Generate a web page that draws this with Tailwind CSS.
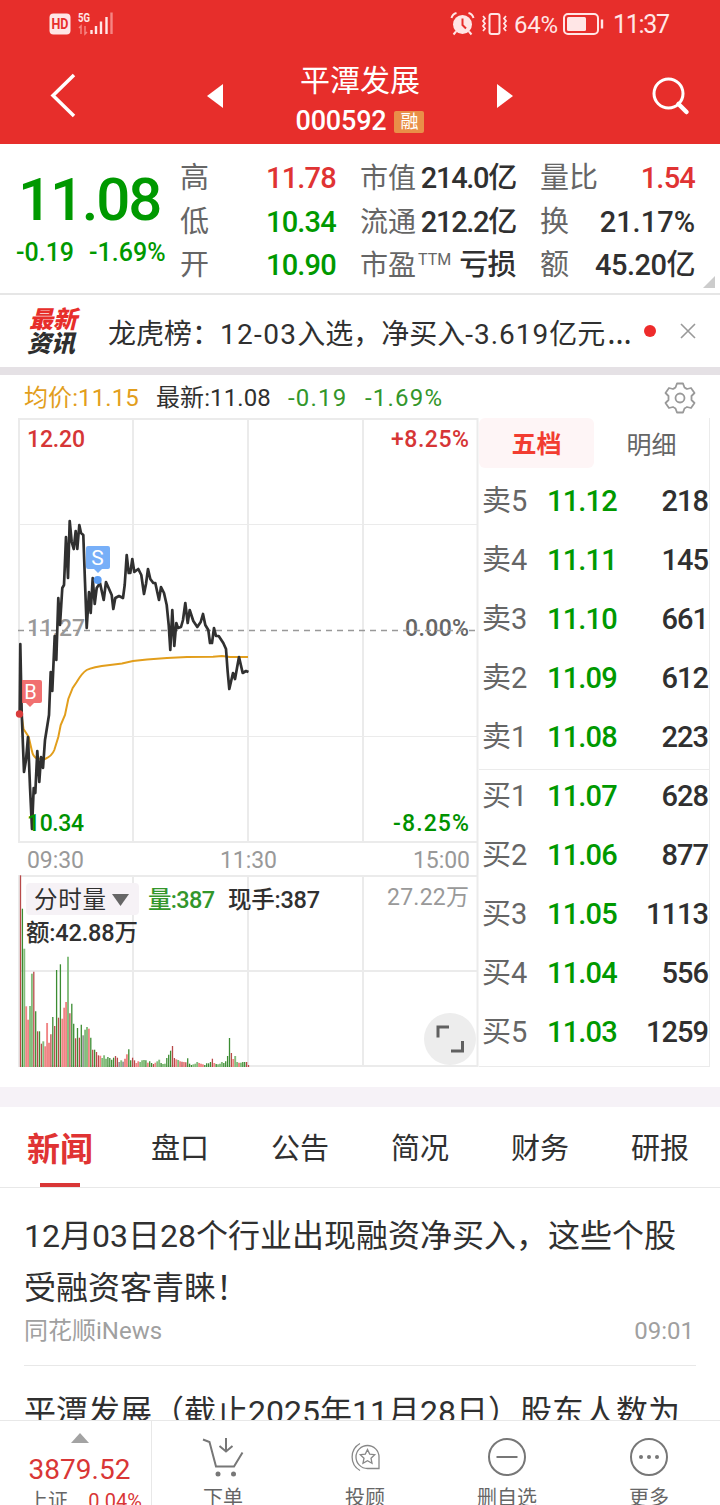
<!DOCTYPE html>
<html lang="zh-CN">
<head>
    <meta charset="UTF-8">
    <meta name="viewport" content="width=device-width, initial-scale=1.0">
    <title>平潭发展 000592</title>
    <script src="https://cdn.jsdelivr.net/npm/@tailwindcss/browser@4"></script>
</head>
<body class="bg-white">
<div class="w-[720px] h-[1505px] overflow-hidden flex flex-col bg-white text-[#303030] font-['Roboto','Noto_Sans_CJK_SC',sans-serif] leading-none whitespace-nowrap">

    <!-- Header -->
    <header class="h-36 shrink-0 bg-[#e72e2b] text-white">
        <!-- Status bar -->
        <div class="h-12 flex items-center justify-between pl-[49px] pr-[50px] text-[#ffe6e6]">
            <svg width="66" height="26" viewBox="49 12 66 26" fill="none">
                <rect x="49.500" y="14.500" width="21" height="21" rx="4" fill="#ffe6e6"/>
                <text x="60" y="30" text-anchor="middle" font-size="14" font-weight="700" fill="#e72e2b" textLength="17" lengthAdjust="spacingAndGlyphs">HD</text>
                <text x="78" y="23" font-size="13.500" font-weight="700" fill="#ffe6e6" textLength="12" lengthAdjust="spacingAndGlyphs">5G</text>
                <path d="M79 29l2-2v8M85 27v8l2-2" stroke="#f58583" stroke-width="1.500"/>
                <path d="M91.500 31v4M96 27v8M101 22.500v12.500M106.500 18v17" stroke="#ffe6e6" stroke-width="2.400"/>
                <path d="M111.500 13.500v21.500" stroke="#f58583" stroke-width="2.400"/>
            </svg>
            <div class="flex items-center">
                <svg width="60" height="26" viewBox="449 11 60 26" fill="none" stroke="#ffe6e6">
                    <circle cx="462.500" cy="24.500" r="9.500" fill="#ffe6e6" stroke="none"/>
                    <path d="M451.500 18q1-4 5-5M468.500 13q4 1 5 5M456 31.500l-2.500 3M469 31.500l2.500 3" stroke-width="2"/>
                    <path d="M462.500 18.500v6.500l3.500 3.500" stroke="#e72e2b" stroke-width="2"/>
                    <rect x="489.500" y="14" width="10" height="20" rx="2" stroke-width="2"/>
                    <path d="M483 16l2 2.500-2 2.500 2 2.500-2 2.500 2 2.500-2 2.500M506 16l-2 2.500 2 2.500-2 2.500 2 2.500-2 2.500 2 2.500" stroke-width="1.800"/>
                </svg>
                <span class="w-[44px] ml-[5px] pt-[2px] text-[24px] tracking-[-0.3px]">64%</span>
                <svg class="ml-[4px]" width="42" height="24" viewBox="562 13 42 24" fill="none" stroke="#ffe6e6">
                    <rect x="564" y="15" width="34" height="20" rx="4" stroke-width="2"/>
                    <rect x="567" y="18" width="19" height="14" rx="1.500" fill="#ffe6e6" stroke="none"/>
                    <path d="M602 20.500v9" stroke-width="2.400"/>
                </svg>
                <span class="w-[57px] ml-[9px] pt-[1px] text-[25px] tracking-[-1.3px]">11:37</span>
            </div>
        </div>
        <!-- Title bar -->
        <div class="h-24 flex items-center justify-between pl-[50px] pr-[30px]">
            <svg width="28" height="46" viewBox="50 72 28 46" fill="none" stroke="#fff" stroke-width="3.500"><path d="M74 74L53 94.500L74 115"/></svg>
            <svg class="ml-[96px]" width="18" height="26" viewBox="0 0 18 26" fill="#fff"><path d="M1 13L17 1v24z"/></svg>
            <div class="flex flex-col items-center w-[140px] ml-[34px] mr-[1px] pt-[13px]">
                <div class="text-[30px] h-[38px]">平潭发展</div>
                <div class="flex items-center gap-2 h-[36px]">
                    <span class="text-[27px] font-medium tracking-[-0.2px]">000592</span>
                    <span class="w-[30px] h-[22px] rounded-[2px] bg-[#e98f48] text-[18px] flex items-center justify-center">融</span>
                </div>
            </div>
            <svg class="ml-[33px] mr-[2px]" width="18" height="26" viewBox="0 0 18 26" fill="#fff"><path d="M17 13L1 1v24z"/></svg>
            <svg class="ml-[102px]" width="40" height="40" viewBox="650 76 40 40" fill="none" stroke="#fff"><circle cx="668.500" cy="93.500" r="14.500" stroke-width="3"/><path d="M678.500 104l8 8" stroke-width="4.500" stroke-linecap="round"/></svg>
        </div>
    </header>

    <!-- Quote -->
    <section class="relative h-[151px] shrink-0 border-b-2 border-[#e6e6e6] flex">
        <div class="w-[180px] text-[#009900] pt-[24px]">
            <div class="pl-[18px] text-[60px] font-medium h-[63px] leading-[63px] tracking-[-2.2px]">11.08</div>
            <div class="pl-[16px] pt-[9px] flex gap-[15px] text-[25px] font-medium"><span>-0.19</span><span>-1.69%</span></div>
        </div>
        <div class="w-[156px] pt-[13px] text-[29px] leading-[43.5px]">
            <div class="flex justify-between"><span class="text-[#666]">高</span><span class="font-medium text-[#e03333] tracking-[-0.8px]">11.78</span></div>
            <div class="flex justify-between"><span class="text-[#666]">低</span><span class="font-medium text-[#009900] tracking-[-0.8px]">10.34</span></div>
            <div class="flex justify-between"><span class="text-[#666]">开</span><span class="font-medium text-[#009900] tracking-[-0.8px]">10.90</span></div>
        </div>
        <div class="w-[156px] ml-[24px] pt-[13px] text-[29px] leading-[43.5px]">
            <div class="flex justify-between"><span class="text-[#666] text-[28px]">市值</span><span class="font-medium tracking-[-1.3px]">214.0亿</span></div>
            <div class="flex justify-between"><span class="text-[#666] text-[28px]">流通</span><span class="font-medium tracking-[-1.3px]">212.2亿</span></div>
            <div class="flex justify-between"><span class="text-[#666] text-[28px] flex">市盈<span class="pl-[2px] text-[16px] leading-[32px]">TTM</span></span><span class="font-medium tracking-[-0.6px]">亏损</span></div>
        </div>
        <div class="w-[155px] ml-[24px] pt-[13px] text-[29px] leading-[43.5px]">
            <div class="flex justify-between"><span class="text-[#666]">量比</span><span class="font-medium text-[#e03333] tracking-[-0.8px]">1.54</span></div>
            <div class="flex justify-between"><span class="text-[#666]">换</span><span class="font-medium">21.17%</span></div>
            <div class="flex justify-between"><span class="text-[#666]">额</span><span class="font-medium tracking-[-0.5px]">45.20亿</span></div>
        </div>
        <svg class="absolute right-[5px] bottom-[5px]" width="12" height="12" viewBox="0 0 12 12"><path d="M12 0v12H0z" fill="#ccc"/></svg>
    </section>

    <!-- News ticker -->
    <section class="h-[80px] shrink-0 border-b-8 border-[#e5e1e5] flex items-center">
        <div class="w-[80px] pl-[28px] pt-[2px] text-[24px] leading-[24px] font-black italic text-[#2e2e2e]">
            <div class="pl-px text-[#e72e2b]">最新</div>
            <div class="-ml-px">资讯</div>
        </div>
        <div class="w-[530px] ml-[28px] pt-[4px] text-[28px]">龙虎榜：<span class="tracking-[1.3px]">12-03</span>入选，净买入<span class="tracking-[1px]">-3.619</span>亿元<span class="pl-[2px] font-['Noto_Sans'] text-[31px] leading-[28px]">…</span></div>
        <div class="w-3 h-3 ml-[6px] rounded-full bg-[#ee2b2b]"></div>
        <svg class="ml-[24px]" width="16" height="16" viewBox="0 0 16 16" stroke="#999" stroke-width="1.600"><path d="M1 1l14 14M15 1L1 15"/></svg>
    </section>

    <!-- Chart legend -->
    <section class="h-[43px] shrink-0 flex items-center pl-[24px] pr-[23px] pt-[2px] text-[24px]">
        <span class="w-[132px] text-[#e29e1c] tracking-[0.1px]">均价:11.15</span>
        <span class="w-[132px] tracking-[0.1px]">最新:11.08</span>
        <span class="w-[77px] text-[#33962b] tracking-[1.2px]">-0.19</span>
        <span class="text-[#33962b] tracking-[1.2px]">-1.69%</span>
        <svg class="ml-auto" width="34" height="34" viewBox="-17 -17 34 34" fill="none" stroke="#999" stroke-width="1.800" stroke-linejoin="round"><circle r="4.500"/><path d="M-3-14.500H3L4.500-10.500Q6-9.500 7-9L11-10L14.500-5L11.500-2V2L14.500 5L11 10L7 9Q6 9.500 4.500 10.500L3 14.500H-3L-4.500 10.500Q-6 9.500-7 9L-11 10L-14.500 5L-11.500 2V-2L-14.500-5L-11-10L-7-9Q-6-9.500-4.500-10.500z"/></svg>
    </section>

    <!-- Chart and order book -->
    <section class="h-[669px] shrink-0 flex">
        <svg width="479" height="651" viewBox="0 418 479 651" fill="none">
            <g stroke="#ebebeb" stroke-width="2">
                <path d="M18 419H478M18 842H478M19 418V843M133 418V843M248 418V843M363 418V843M477.500 418V1067"/>
                <path d="M18 524.500H478M18 736.500H478" stroke-width="1.200"/>
                <path d="M18 876H478M18 971H478M18 1066H478M19 875V1067M133 875V1067M248 875V1067M363 875V1067"/>
            </g>
            <g font-size="23" font-weight="500" fill="#999">
                <text x="27" y="636" textLength="58">11.27</text>
                <text x="405" y="636" fill="#666" textLength="64">0.00%</text>
                <text x="27" y="868" font-weight="400" textLength="57">09:30</text>
                <text x="220" y="868" font-weight="400" textLength="57">11:30</text>
                <text x="413" y="868" font-weight="400" textLength="57">15:00</text>
                <text x="387" y="905" font-weight="400" textLength="82">27.22万</text>
                <text x="27" y="447" fill="#d63636" textLength="58">12.20</text>
                <text x="391" y="447" fill="#d63636" textLength="78">+8.25%</text>
                <text x="393" y="831" fill="#009200" textLength="76">-8.25%</text>
            </g>
            <path d="M18 630.500H478" stroke="#999" stroke-width="1.500" stroke-dasharray="6 5"/>
            <!-- average price -->
            <path d="M20 713L22 718L23.500 729L28.700 737L31.700 750Q33 757 37 758.500L45 759Q52 756 54.300 750L58.300 737L60.700 725L65 715L68.300 699L72.700 688L76.700 682Q82 673 86.700 670Q92 667 110 665L122 663.500L133 661L147 659.500L167 658L187 657L213 656.700L222 656L230 657H248" stroke="#e29e1c" stroke-width="2"/>
            <!-- price -->
            <path d="M19.700 713L20.300 644L21.700 713L24 772L26 760L28 737L30 787L32 829L33.700 788L35.300 793L37.300 751L39.300 782L41 757L43 768L45 740L49 715L50.700 672L52.300 691L54.700 636L56.300 660L58.300 598L60 625L62.300 588L64 585L66 537L68 578L69.700 521L71.700 542L73.700 549L75.700 531L77.300 549L79.300 525L81 533L83.300 535L85 582L86.700 628L89 592L90.700 613L92.700 578L94.700 604L96.700 588L100 583L103.700 600L106 582L111.700 595L113.300 609L115.300 598L119 596L123 598L124.700 585L126.700 555L128.700 573H130.300L132.300 559L134.300 572L138.300 569L141.300 575L144 594L146 584L148 569L150.300 579L153.300 583H155.300L159 600L161 587L164 593L166.700 605L168.700 625L170.300 650L172.300 610L174.300 646L176.300 623L178 628L181 627L183 620L185.300 603L187.700 623L189.700 610L193.300 621L197.300 627L200.700 622L203 614L205.300 625L208.300 630L210 643H212L214 628L216 636H218.700L223.300 643L226 649L227.700 672L229.300 689L233 673L235 679L239 657L242.700 673L246 671L248.500 672" stroke="#303030" stroke-width="2.700" stroke-linejoin="round"/>
            <text x="27" y="831" font-size="23" font-weight="500" fill="#009200" textLength="57">10.34</text>
            <!-- trade markers -->
            <path d="M88 546h20a2 2 0 0 1 2 2v19a2 2 0 0 1-2 2h-6l-4 4-4-4h-6a2 2 0 0 1-2-2v-19a2 2 0 0 1 2-2z" fill="#77aff8"/>
            <circle cx="97.700" cy="580" r="4" fill="#5b9df3"/>
            <text x="97.500" y="565" font-size="21" text-anchor="middle" fill="#fff">S</text>
            <path d="M22 680h18a2 2 0 0 1 2 2v19a2 2 0 0 1-2 2h-6l-4 4-4-4h-4z" fill="#f06060" fill-opacity=".9"/>
            <circle cx="19.500" cy="714" r="3.700" fill="#d93c3c"/>
            <text x="30.500" y="699" font-size="20" text-anchor="middle" fill="#fff">B</text>
            <!-- volume -->
            <g id="volume" stroke-width="1.300"></g>
            <rect x="26" y="883" width="113" height="32" rx="4" fill="#f6f2f6"/>
            <g font-size="23.500" fill="#303030">
                <text x="34" y="908" textLength="72">分时量</text>
                <path d="M112 894h17l-8.500 12z" fill="#666"/>
                <text x="148" y="908" font-weight="500" fill="#33962b" textLength="67">量:387</text>
                <text x="228" y="908" font-weight="500" textLength="92">现手:387</text>
                <text x="26" y="941" font-weight="500" textLength="112">额:42.88万</text>
            </g>
            <circle cx="450" cy="1039" r="26" fill="#ededed"/>
            <path d="M438 1037.500V1027H449M462.500 1041V1051H451" stroke="#606060" stroke-width="3"/>
        </svg>

        <div class="w-[231px] h-[649px] border-r border-b border-[#ebebeb] flex flex-col">
            <div class="h-[50px] flex text-[25px] items-center">
                <div class="w-[115px] h-[50px] pt-[3px] rounded-md bg-[#fef5f6] text-[#f23d31] font-bold flex items-center justify-center">五档</div>
                <div class="w-[115px] pt-[4px] text-center text-[#666]">明细</div>
            </div>
            <div id="asks" class="h-[302px] pt-[4px] border-b border-[#ebebeb]"></div>
            <div id="bids" class="-mt-[3px]"></div>
        </div>
    </section>

    <!-- Tabs -->
    <nav class="h-[101px] shrink-0 border-t-[20px] border-t-[#f6f2f7] border-b border-b-[#e8e8e8] flex text-[29px]">
        <a class="relative flex-1 flex items-center justify-center pt-[4px] text-[33px] font-bold text-[#e03333]">新闻<span class="absolute bottom-0 w-10 h-1 bg-[#d93636]"></span></a>
        <a class="flex-1 flex items-center justify-center pt-[4px]">盘口</a>
        <a class="flex-1 flex items-center justify-center pt-[4px]">公告</a>
        <a class="flex-1 flex items-center justify-center pt-[4px]">简况</a>
        <a class="flex-1 flex items-center justify-center pt-[4px]">财务</a>
        <a class="flex-1 flex items-center justify-center pt-[4px]">研报</a>
    </nav>

    <!-- News list -->
    <main class="h-[232px] shrink-0 overflow-hidden px-6">
        <article class="h-[178px] border-b border-[#e8e8e8] pt-[22px]">
            <h2 class="text-[32px] leading-[52px]">12月03日28个行业出现融资净买入，这些个股<br>受融资客青睐！</h2>
            <div class="flex justify-between pt-[5px] pr-[2px] text-[24px] text-[#a0a0a0]"><span>同花顺iNews</span><span>09:01</span></div>
        </article>
        <article class="pt-[20px]">
            <h2 class="text-[32px] leading-[52px]">平潭发展（截止2025年11月28日）股东人数为</h2>
        </article>
    </main>

    <!-- Bottom bar -->
    <footer class="h-[85px] shrink-0 border-t border-[#e8e8e8] flex text-[20px] text-[#666]">
        <div class="w-[152px] border-r border-[#e8e8e8] flex flex-col items-center pl-[8px] pt-[12px] text-[#d93636]">
            <svg class="shrink-0" width="18" height="10" viewBox="0 0 18 10"><path d="M9 0l9 10H0z" fill="#a3a3a3"/></svg>
            <div class="shrink-0 text-[28px] pt-[13px]">3879.52</div>
            <div class="shrink-0 w-full flex justify-between pl-[20px] pr-[9px] pt-[7px]"><span class="text-[#666]">上证</span><span>0.04%</span></div>
        </div>
        <div class="flex-1 flex flex-col items-center pt-[16px]">
            <svg class="shrink-0" width="42" height="42" viewBox="202 1437 42 42" fill="none" stroke="#777" stroke-width="2"><path d="M203 1439.500L209.500 1442L216 1466.500H234L242.500 1452.500M226 1438V1451M219.500 1446L226 1451.500L232.500 1446"/><circle cx="218" cy="1474" r="2.500" fill="#777" stroke="none"/><circle cx="233.500" cy="1474" r="2.500" fill="#777" stroke="none"/></svg>
            <span class="pt-[9px]">下单</span>
        </div>
        <div class="flex-1 flex flex-col items-center pt-[16px]">
            <svg class="shrink-0" width="42" height="42" viewBox="344 1437 42 42" fill="none" stroke="#888" stroke-width="1.300"><path d="M379 1457V1468.500H367.500A11.500 11.500 0 1 1 379 1457z"/><path d="M360 1443.500A15.500 15.500 0 0 0 360 1470.500"/><path d="M367.500 1449.500l2.200 4.600 5 .6-3.700 3.500 1 5-4.500-2.500-4.500 2.500 1-5-3.700-3.500 5-.6z"/></svg>
            <span class="pt-[9px]">投顾</span>
        </div>
        <div class="flex-1 flex flex-col items-center pt-[16px]">
            <svg class="shrink-0" width="42" height="42" viewBox="0 1 42 42" fill="none" stroke="#777" stroke-width="2"><circle cx="21" cy="21" r="18"/><path d="M10.500 21h21"/></svg>
            <span class="pt-[9px]">删自选</span>
        </div>
        <div class="flex-1 flex flex-col items-center pt-[16px]">
            <svg class="shrink-0" width="42" height="42" viewBox="0 1 42 42" fill="none" stroke="#777" stroke-width="2"><circle cx="21" cy="21" r="18"/><g fill="#777" stroke="none"><circle cx="13" cy="21" r="2"/><circle cx="21" cy="21" r="2"/><circle cx="29" cy="21" r="2"/></g></svg>
            <span class="pt-[9px]">更多</span>
        </div>
    </footer>
</div>

<script>
    // Order book rows: label, price, lots
    const asks = [['卖5', '11.12', 218], ['卖4', '11.11', 145], ['卖3', '11.10', 661], ['卖2', '11.09', 612], ['卖1', '11.08', 223]];
    const bids = [['买1', '11.07', 628], ['买2', '11.06', 877], ['买3', '11.05', 1113], ['买4', '11.04', 556], ['买5', '11.03', 1259]];

    function createRow([label, price, lots]) {
        return `
            <div class="h-[59px] flex items-center pl-[3px] pr-[1px] text-[29px]">
                <span class="w-[65px] text-[#666]">${label}</span>
                <span class="font-medium text-[#009900] tracking-[-0.8px]">${price}</span>
                <span class="ml-auto font-medium tracking-[-1px]">${lots}</span>
            </div>
        `;
    }
    document.getElementById('asks').innerHTML = asks.map(createRow).join('');
    document.getElementById('bids').innerHTML = bids.map(createRow).join('');

    // One bar per minute, height in thirds of a pixel
    const bars = 'r575 g475 l355 p182 p142 l183 l280 r286 g167 r107 g107 r70 l77 p62 p132 p73 r98 g150 r123 g291 r148 g308 p145 p178 p195 l331 r161 g190 g130 r86 g117 r88 g127 n95 l112 l120 p115 g88 r52 g52 r45 r35 p34 l27 l35 l25 g30 g27 g22 g28 r33 r28 n15 l20 n16 p25 p38 g53 g20 r28 r20 p12 p17 l15 l20 l21 g20 p13 g17 g12 r9 p13 l17 l22 g12 l9 l10 g27 g37 g49 r63 r27 p23 l21 p17 r16 p15 r14 g26 g10 g6 l8 l10 l15 p12 p10 p8 g6 g11 g11 g15 r25 p12 g9 l8 l10 l15 g12 g17 g33 g87 r42 p24 l33 l15 p13 l13 g15 g15 r15 r6'.split(' ');
    const colors = { r: '#b84a4a', p: '#f08585', g: '#3b8c32', l: '#83bd7c', n: '#999' };
    document.getElementById('volume').innerHTML = bars.map((bar, i) => {
        const x = (20.500 + i * 1.900).toFixed(2);
        return `<path d="M${x} 1067v-${(bar.slice(1) / 3).toFixed(1)}" stroke="${colors[bar[0]]}"${/[pln]/.test(bar[0]) ? ' stroke-width="1.9"' : ''}/>`;
    }).join('');
</script>
</body>
</html>
